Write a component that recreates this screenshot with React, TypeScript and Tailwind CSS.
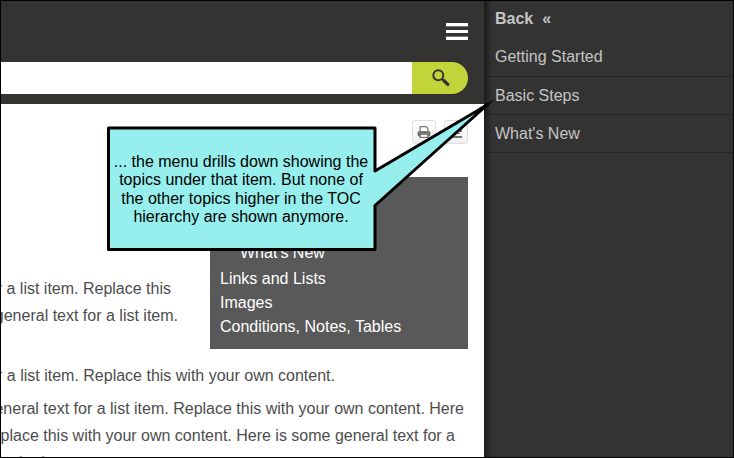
import React from "react";

const menu = ["Getting Started", "Basic Steps", "What's New"];

function Header() {
  return (
    <header className="flex h-[103px] shrink-0 flex-col bg-[#333331]">
      <div className="flex h-[61px] items-start justify-end pr-4 pt-[22px]">
        <svg width="22" height="17" viewBox="0 0 22 17" shapeRendering="crispEdges" fill="#fff">
          <path d="M0 0h22v3H0zM0 7h22v3H0zM0 14h22v3H0z" />
          <path d="M0 3h22v1H0zM0 13h22v1H0z" fill="#777775" />
        </svg>
      </div>
      <div className="mr-4 flex h-8">
        <div className="flex-1 bg-white" />
        <div className="flex w-14 items-center justify-center rounded-r-full bg-[#c1d43a]">
          <svg className="ml-px" width="18" height="18" viewBox="0 0 18 18" fill="none" stroke="#333331">
            <circle cx="6.3" cy="6.2" r="5" strokeWidth="1.9" />
            <path d="M10 10l1.8 1.8" strokeWidth="2" />
            <path d="M12 11.800l3.800 3.600" strokeWidth="3.300" strokeLinecap="round" />
          </svg>
        </div>
      </div>
    </header>
  );
}

function ToolButton({ children }: { children: React.ReactNode }) {
  return (
    <div className="flex size-6 items-center justify-center rounded-[3px] border border-[#dddddd] bg-linear-to-b from-white to-[#f1f1f1]">
      {children}
    </div>
  );
}

function Line({ children, className }: { children: string; className: string }) {
  return (
    <p className={"flex h-[27px] shrink-0 items-center justify-end whitespace-pre " + className}>{children}</p>
  );
}

function Content() {
  return (
    <main className="flex min-h-0 flex-1 flex-col overflow-hidden bg-white text-[#4d4d4d]">
      <div className="flex justify-end gap-2 pr-4 pt-4">
        <ToolButton>
          <svg width="14" height="14" viewBox="0 0 14 14">
            <path d="M3.200 6.500V1.600h5.800l1.800 1.600v3.300" fill="#fff" stroke="#777" strokeWidth="1.200" />
            <rect x="0.500" y="6" width="13" height="5.500" rx="1.700" fill="#777" />
            <path d="M3.600 9.200h6.800l.6 3.200H3z" fill="#fff" stroke="#777" strokeWidth="1.200" />
          </svg>
        </ToolButton>
        <ToolButton>
          <svg width="14" height="14" viewBox="0 0 14 14" shapeRendering="crispEdges">
            <path d="M2 2h11v1H2zM2 5h11v2H2zM2 8h9v1H2zM2 11h11v2H2z" fill="#777" />
          </svg>
        </ToolButton>
      </div>
      <div className="mt-[33px] flex h-[172px] shrink-0 justify-between pr-4">
        <div className="flex flex-col pt-[98px]">
          <Line className="w-[170px]">for a list item. Replace this</Line>
          <Line className="w-[177px]">general text for a list item.</Line>
        </div>
        <div className="flex w-[258px] flex-col justify-end bg-[#595959] pb-[10px] pl-[10px] leading-6 text-white">
          <div className="pl-5">What's New</div>
          <div className="mt-[2px]">Links and Lists</div>
          <div>Images</div>
          <div>Conditions, Notes, Tables</div>
        </div>
      </div>
      <Line className="mt-[13px] w-[334px]">for a list item. Replace this with your own content.</Line>
      <Line className="mt-[6px] w-[463px]">general text for a list item. Replace this with your own content. Here</Line>
      <Line className="w-[454px]">Replace this with your own content. Here is some general text for a</Line>
      <Line className="-mt-px w-[49px]">content.</Line>
    </main>
  );
}

function Drawer() {
  return (
    <aside className="flex w-[249px] flex-col bg-[#333333] bg-linear-to-r from-[#1b1b1b] to-[#333333] to-[8px] text-[#c4c4c4]">
      <div className="h-9 whitespace-pre pl-[11px] pt-[6px] font-bold">{"Back  «"}</div>
      <ul>
        {menu.map((item, i) => (
          <li key={item} className={"flex items-center border-b border-[#242424] pl-[11px] " + (i === 0 ? "h-10" : "h-[38px]")}>
            {item}
          </li>
        ))}
      </ul>
    </aside>
  );
}

function Callout() {
  return (
    <div className="pointer-events-none absolute -left-px -top-px h-[458px] w-[734px]">
      <svg className="absolute left-0 top-0" width="734" height="458" viewBox="0 0 734 458">
        <path
          d="M108.500 128H375V171L487 105L375 205.500V249.500H108.500Z"
          fill="#96efed"
          stroke="#000"
          strokeWidth="3"
          strokeLinejoin="round"
        />
        <path d="M479 108L495.500 98.500L482 111Z" />
      </svg>
      <div className="absolute left-[108px] top-[153px] w-[266px] whitespace-nowrap text-center leading-[18.300px] text-black">
        <div>... the menu drills down showing the</div>
        <div>topics under that item. But none of</div>
        <div>the other topics higher in the TOC</div>
        <div>hierarchy are shown anymore.</div>
      </div>
    </div>
  );
}

export default function App() {
  return (
    <div className="relative flex h-[458px] w-[734px] overflow-hidden border border-black bg-[#333333] font-['Liberation_Sans',Arial,sans-serif] text-[16px]">
      <div className="flex w-[483px] flex-col overflow-hidden">
        <Header />
        <Content />
      </div>
      <Drawer />
      <Callout />
    </div>
  );
}
